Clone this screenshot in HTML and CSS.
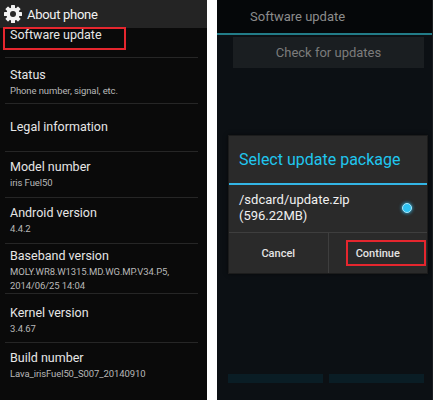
FILE: index.html
```html
<!DOCTYPE html>
<html>
<head>
<meta charset="utf-8">
<link rel="stylesheet" href="styles.css">
</head>
<body>
<div class="page">
  <section class="screen left">
    <header class="actionbar">
      <svg class="gear" width="20" height="20" viewBox="0 0 20 20">
        <g fill="#f2f2f2">
          <circle cx="10" cy="10" r="6.6"/>
          <rect x="8" y="1" width="4" height="18" rx="0.6"/>
          <rect x="8" y="1" width="4" height="18" rx="0.6" transform="rotate(45 10 10)"/>
          <rect x="8" y="1" width="4" height="18" rx="0.6" transform="rotate(90 10 10)"/>
          <rect x="8" y="1" width="4" height="18" rx="0.6" transform="rotate(135 10 10)"/>
        </g>
        <circle cx="10" cy="10" r="3" fill="#262626"/>
      </svg>
      <span class="ab-title">About phone</span>
    </header>
    <div class="list">
      <div class="item first"><div class="t">Software update</div></div>
      <div class="item status"><div class="t">Status</div><div class="s">Phone number, signal, etc.</div></div>
      <div class="item legal"><div class="t">Legal information</div></div>
      <div class="item std"><div class="t">Model number</div><div class="s">iris Fuel50</div></div>
      <div class="item std"><div class="t">Android version</div><div class="s">4.4.2</div></div>
      <div class="item base"><div class="t">Baseband version</div><div class="s">MOLY.WR8.W1315.MD.WG.MP.V34.P5,</div><div class="s">2014/06/25 14:04</div></div>
      <div class="item kernel"><div class="t">Kernel version</div><div class="s">3.4.67</div></div>
      <div class="item std"><div class="t">Build number</div><div class="s">Lava_irisFuel50_S007_20140910</div></div>
    </div>
    <div class="mark mark-left"></div>
  </section>

  <section class="screen right">
    <header class="r-title">Software update</header>
    <div class="r-body">
      <div class="check">Check for updates</div>
      <div class="dialog">
        <div class="d-title">Select update package</div>
        <div class="d-item">
          <div class="d-path">/sdcard/update.zip<br>(596.22MB)</div>
          <span class="radio"></span>
        </div>
        <div class="d-buttons">
          <div class="d-btn">Cancel</div>
          <div class="d-btn cont">Continue<span class="mark mark-right"></span></div>
        </div>
      </div>
      <div class="ghost">
        <div class="ghost-bar"></div>
        <div class="ghost-bar"></div>
      </div>
    </div>
  </section>
</div>
</body>
</html>
```

FILE: styles.css
```css
* { box-sizing: border-box; }
html, body { margin: 0; padding: 0; background: #ffffff; }
body { font-family: Roboto, "Noto Sans", sans-serif; }

.page {
  display: flex;
  gap: 10px;
  width: 435px;
  height: 400px;
}

.screen { position: relative; height: 400px; overflow: hidden; }
.left { width: 207px; background: #0a0a0a; }
.right { width: 216px; background: #0c1014; border-right: 1px solid #1a1d20; }

.actionbar {
  height: 28px;
  background: #242424;
  display: flex;
  align-items: center;
  padding-left: 3px;
  gap: 4px;
}
.gear { display: block; }
.ab-title { color: #f2f2f2; font-size: 13px; letter-spacing: -0.3px; }

.list { padding: 0 9px 0 5px; }
.item { border-top: 1px solid #262626; padding-left: 5px; }
.item .t { color: #e6e6e6; font-size: 12.5px; line-height: 18px; white-space: nowrap; }
.item .s { color: #b8b8b8; font-size: 9.5px; line-height: 14px; white-space: nowrap; letter-spacing: -0.1px; }

.item.first { border-top: none; padding-bottom: 15px; }
.item.first .t { line-height: 14px; }
.item.status { padding-top: 8px; padding-bottom: 5px; }
.item.legal { padding-top: 14px; padding-bottom: 15px; }
.item.std { padding-top: 6px; padding-bottom: 7px; }
.item.base { padding-top: 3px; padding-bottom: 0; }
.item.kernel { padding-top: 10px; padding-bottom: 6px; }

.mark { position: absolute; border: 2px solid #e5262e; }
.mark-left { left: 3px; top: 27px; width: 123px; height: 23px; }

.r-title {
  height: 35px;
  background: #050709;
  color: #8c8c8c;
  font-size: 13px;
  line-height: 33px;
  padding-left: 33px;
  border-bottom: 2px solid #227c88;
}
.r-body { padding: 2px 8px 0 11px; }
.check {
  height: 31px;
  margin-left: 5px;
  background: #1a1e21;
  color: #7c7c7c;
  font-size: 13px;
  line-height: 31px;
  text-align: center;
}

.dialog {
  margin-top: 67px;
  width: 200px;
  background: #2a2a2a;
  border: 1px solid #1c1c1c;
  box-shadow: 0 0 4px rgba(0,0,0,0.6);
}
.d-title {
  height: 49px;
  color: #20c6ee;
  font-size: 16px;
  line-height: 47px;
  padding-left: 10px;
  border-bottom: 2px solid #33b5e5;
  white-space: nowrap;
}
.d-item {
  height: 48px;
  display: flex;
  align-items: center;
  justify-content: space-between;
  padding: 0 15px 2px 10px;
  border-bottom: 1px solid #3e3e3e;
}
.d-path { color: #f0f0f0; font-size: 13px; line-height: 16px; white-space: nowrap; }
.radio {
  width: 10px; height: 10px; border-radius: 50%;
  background: #2ec2f2;
  box-shadow: 0 0 3px 1px rgba(51,181,229,0.6);
  border: 1px solid #a8e6fa;
  flex: none;
}
.d-buttons { display: flex; height: 40px; }
.d-btn {
  flex: 1;
  position: relative;
  color: #e4e4e4;
  font-size: 11px;
  font-weight: 500;
  display: flex;
  align-items: center;
  justify-content: center;
}
.d-btn.cont { border-left: 1px solid #3e3e3e; }
.mark-right { left: 17px; top: 7px; width: 80px; height: 26px; }

.ghost { display: flex; gap: 6px; margin-top: 100px; }
.ghost-bar { flex: 1; height: 9px; background: #0a1d25; }
```
